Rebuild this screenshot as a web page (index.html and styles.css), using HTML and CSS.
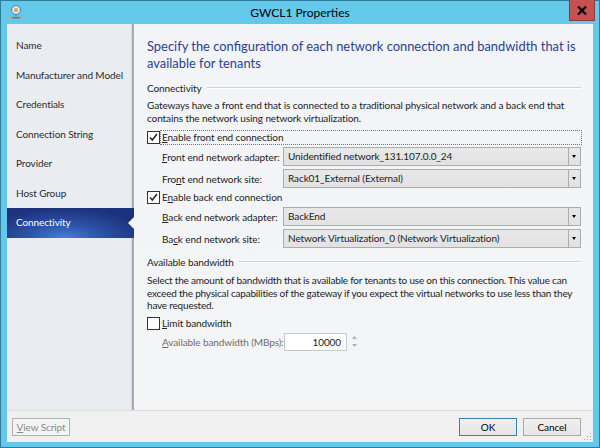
FILE: index.html
```html
<!DOCTYPE html>
<html>
<head>
<meta charset="utf-8">
<link rel="stylesheet" href="styles.css">
</head>
<body>
<div class="window">
  <div class="titlebar">
    <svg class="appicon" width="16" height="16" viewBox="0 0 16 16">
      <circle cx="8" cy="6" r="4.5" fill="#cfe9f5" stroke="#5a7f93" stroke-width="1"/>
      <circle cx="8" cy="6" r="2" fill="#e9a04a"/>
      <rect x="7.5" y="10" width="1" height="3" fill="#5a7f93"/>
      <rect x="2" y="13" width="12" height="1.5" fill="#5a7f93"/>
      <rect x="2" y="12.5" width="2" height="2.5" fill="#e9a04a"/>
      <rect x="12" y="12.5" width="2" height="2.5" fill="#e9a04a"/>
    </svg>
    <div class="title">GWCL1 Properties</div>
    <div class="close">
      <svg width="10" height="9" viewBox="0 0 10 9"><path d="M1 0.5 L9 8.5 M9 0.5 L1 8.5" stroke="#000" stroke-width="2.2"/></svg>
    </div>
  </div>
  <div class="client">
    <div class="main">
      <nav class="nav">
        <div class="nav-item">Name</div>
        <div class="nav-item">Manufacturer and Model</div>
        <div class="nav-item">Credentials</div>
        <div class="nav-item">Connection String</div>
        <div class="nav-item">Provider</div>
        <div class="nav-item">Host Group</div>
        <div class="nav-item selected">Connectivity<span class="pointer"></span></div>
      </nav>
      <div class="separator"></div>
      <section class="content">
        <h1 class="heading">Specify the configuration of each network connection and bandwidth that is<br>available for tenants</h1>

        <div class="group-title"><span>Connectivity</span><span class="rule"></span></div>
        <p class="desc">Gateways have a front end that is connected to a traditional physical network and a back end that<br>contains the network using network virtualization.</p>

        <label class="check first"><span class="box"><svg width="11" height="11" viewBox="0 0 11 11"><path d="M2 5.5 L4.3 8 L9 2" stroke="#222" stroke-width="1.5" fill="none"/></svg></span><span class="cl focus"><u>E</u>nable front end connection</span></label>
        <div class="field">
          <span class="flabel"><u>F</u>ront end network adapter:</span>
          <div class="combo"><span class="ctext">Unidentified network_131.107.0.0_24</span><span class="carrow"></span></div>
        </div>
        <div class="field">
          <span class="flabel">Fro<u>n</u>t end network site:</span>
          <div class="combo"><span class="ctext">Rack01_External (External)</span><span class="carrow"></span></div>
        </div>

        <label class="check second"><span class="box"><svg width="11" height="11" viewBox="0 0 11 11"><path d="M2 5.5 L4.3 8 L9 2" stroke="#222" stroke-width="1.5" fill="none"/></svg></span><span class="cl">E<u>n</u>able back end connection</span></label>
        <div class="field">
          <span class="flabel"><u>B</u>ack end network adapter:</span>
          <div class="combo"><span class="ctext">BackEnd</span><span class="carrow"></span></div>
        </div>
        <div class="field">
          <span class="flabel">Ba<u>c</u>k end network site:</span>
          <div class="combo"><span class="ctext">Network Virtualization_0 (Network Virtualization)</span><span class="carrow"></span></div>
        </div>

        <div class="group-title second"><span>Available bandwidth</span><span class="rule"></span></div>
        <p class="desc second">Select the amount of bandwidth that is available for tenants to use on this connection. This value can<br>exceed the physical capabilities of the gateway if you expect the virtual networks to use less than they<br>have requested.</p>

        <label class="check third"><span class="box"></span><span class="cl"><u>L</u>imit bandwidth</span></label>
        <div class="field disabled">
          <span class="flabel"><u>A</u>vailable bandwidth (MBps):</span>
          <div class="spin"><span>10000</span></div>
          <div class="spinner">
            <svg width="7" height="18" viewBox="0 0 7 18"><path d="M3.5 3 L6 6 L1 6 Z M1 11 L6 11 L3.5 14 Z" fill="#b0b0b0"/></svg>
          </div>
        </div>
      </section>
    </div>
    <div class="footer">
      <button class="btn disabled"><u>V</u>iew Script</button>
      <div class="spacer"></div>
      <button class="btn default">OK</button>
      <button class="btn cancel">Cancel</button>
      <svg class="grip" width="9" height="9" viewBox="0 0 9 9">
        <rect x="7" y="1" width="1" height="1" fill="#a8a8a8"/>
        <rect x="4" y="4" width="1" height="1" fill="#a8a8a8"/>
        <rect x="7" y="4" width="1" height="1" fill="#a8a8a8"/>
        <rect x="1" y="7" width="1" height="1" fill="#a8a8a8"/>
        <rect x="4" y="7" width="1" height="1" fill="#a8a8a8"/>
        <rect x="7" y="7" width="1" height="1" fill="#a8a8a8"/>
      </svg>
    </div>
  </div>
</div>
</body>
</html>
```
FILE: styles.css
```css
* { box-sizing: border-box; }
html, body { margin: 0; padding: 0; }
body {
  font-family: Lato, "Open Sans", sans-serif;
  font-size: 10px;
  letter-spacing: -0.1px;
  color: #222;
  background: #64c9ea;
}
.window {
  width: 600px;
  height: 448px;
  background: #63c8e9;
  border: 1px solid #2f7b98;
  display: flex;
  flex-direction: column;
  padding: 0 6px 5px 6px;
}
.titlebar {
  height: 23px;
  flex: none;
  display: flex;
  align-items: center;
  position: relative;
}
.appicon { margin-left: 1px; margin-top: -1px; }
.title {
  position: absolute;
  left: 0; right: 0;
  top: 4px;
  text-align: center;
  font-size: 12px;
  letter-spacing: 0;
  color: #000;
}
.close {
  position: absolute;
  right: -2px;
  top: -1px;
  width: 26px;
  height: 21px;
  background: #c75050;
  border: 1px solid #8d3a3a;
  border-top: none;
  display: flex;
  align-items: center;
  justify-content: center;
}
.client {
  flex: 1;
  display: flex;
  flex-direction: column;
  background: #f0f0f0;
}
.main {
  height: 386px;
  flex: none;
  display: flex;
}
.nav {
  width: 124px;
  background: #e9edf1;
  padding-top: 7px;
  position: relative;
  z-index: 1;
}
.nav-item {
  height: 29.5px;
  line-height: 29.5px;
  padding-left: 9px;
  white-space: nowrap;
  color: #2a2a2a;
  position: relative;
}
.nav-item.selected {
  color: #fff;
  margin-right: -3px;
  background: radial-gradient(ellipse 65% 100% at 45% 100%, #4580dc 0%, #2c52a8 45%, #1d327c 100%);
}
.pointer {
  position: absolute;
  right: 0;
  top: 9px;
  width: 0; height: 0;
  border-top: 6px solid transparent;
  border-bottom: 6px solid transparent;
  border-right: 6px solid #f3f5f8;
}
.separator {
  width: 4px;
  flex: none;
  background: linear-gradient(to right, #d7d9dc 0, #d7d9dc 1px, #a9abae 1px, #a9abae 3px, #f3f5f8 3px);
}
.content {
  flex: 1;
  background: linear-gradient(to bottom, #f2f4f7, #f4f5f7);
  padding: 14px 12px 0 12px;
}
.heading {
  margin: 0;
  font-weight: normal;
  font-size: 12.9px;
  letter-spacing: 0;
  line-height: 16.5px;
  color: #2b3f92;
  white-space: nowrap;
}
.group-title {
  display: flex;
  align-items: center;
  margin-top: 10px;
  height: 13px;
}
.group-title.second { margin-top: 7px; }
.group-title .rule {
  flex: 1;
  height: 1px;
  background: #d0d2d5;
  border-bottom: 1px solid #fff;
  margin-left: 5px;
  box-sizing: content-box;
}
.desc {
  margin: 5px 0 0 0;
  line-height: 12.5px;
  white-space: nowrap;
}
.desc.second { margin-top: 6px; letter-spacing: -0.2px; }
.check {
  display: flex;
  align-items: center;
  height: 14px;
  white-space: nowrap;
}
.check.first { margin-top: 6px; }
.check.second { margin-top: 2px; }
.check.third { margin-top: 4.5px; }
.cl { padding: 0 1px; line-height: 13px; }
.cl.focus {
  flex: 1;
  outline: 1px dotted #777;
  outline-offset: 0;
}
.box {
  width: 13px;
  height: 13px;
  border: 1px solid #333;
  background: #fff;
  margin-right: 1px;
  display: flex;
}
.field {
  display: flex;
  align-items: center;
  height: 19px;
  margin-top: 3px;
  padding-left: 15px;
}
.flabel {
  width: 121px;
  white-space: nowrap;
}
.combo {
  flex: 1;
  height: 19px;
  display: flex;
  border: 1px solid #acacac;
  background: linear-gradient(#e8e8e8, #e2e2e2);
}
.ctext {
  flex: 1;
  padding-left: 4px;
  line-height: 17px;
  white-space: nowrap;
  overflow: hidden;
}
.carrow {
  width: 12px;
  border-left: 1px solid #acacac;
  position: relative;
}
.carrow::after {
  content: "";
  position: absolute;
  left: 3px;
  top: 7px;
  border-left: 2.5px solid transparent;
  border-right: 2.5px solid transparent;
  border-top: 3px solid #000;
}
.field.disabled { margin-top: 3px; height: 18px; }
.field.disabled .flabel { color: #6d6d6d; width: 122px; }
.spin {
  width: 63px;
  height: 18px;
  border: 1px solid #c8c8c8;
  background: #fff;
  text-align: right;
  padding-right: 5px;
  line-height: 16px;
  color: #222;
}
.spinner { margin-left: 4px; display: flex; }
.footer {
  flex: 1;
  display: flex;
  align-items: center;
  padding: 0 12px 0 5px;
  border-top: 1px solid #dcdcdc;
  position: relative;
}
.spacer { flex: 1; }
.btn {
  font-family: inherit;
  font-size: 10px;
  letter-spacing: -0.1px;
  height: 18px;
  padding: 0;
  border: 1px solid #acacac;
  background: linear-gradient(#f0f0f0, #e5e5e5);
  color: #000;
  white-space: nowrap;
}
.btn.disabled {
  width: 58px;
  color: #8a8a8a;
  background: #f4f4f4;
  border-color: #adb2b5;
}
.btn.default {
  width: 58px;
  border: 1px solid #3c7fb1;
  margin-right: 6px;
}
.btn.cancel { width: 58px; }
.grip { position: absolute; right: 1px; bottom: 1px; }
```
